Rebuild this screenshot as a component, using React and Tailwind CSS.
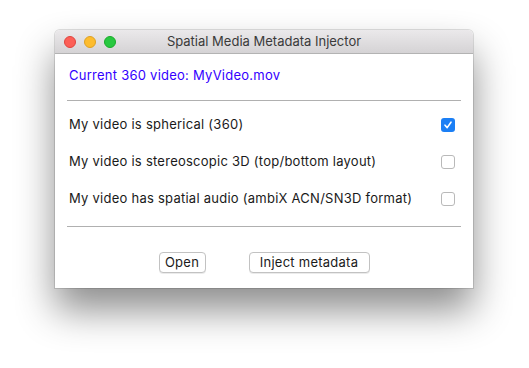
import React from "react";

function Check({ checked }) {
  if (checked) {
    return (
      <div className="w-[14px] h-[14px] rounded-[3px] bg-[#1b7ff5] flex items-center justify-center">
        <svg width="10" height="10" viewBox="0 0 10 10">
          <path d="M2 5.2 L4.2 7.6 L8 2.2" fill="none" stroke="white" strokeWidth="1.6" strokeLinecap="round" strokeLinejoin="round" />
        </svg>
      </div>
    );
  }
  return <div className="w-[14px] h-[14px] rounded-[3px] border border-[#b9b9b9] bg-white" />;
}

export default function App() {
  const rows = [
    ["My video is spherical (360)", true],
    ["My video is stereoscopic 3D (top/bottom layout)", false],
    ["My video has spatial audio (ambiX ACN/SN3D format)", false],
  ];
  return (
    <div className="w-[529px] h-[368px] bg-white pt-[30px] pl-[55px] font-['Inter',sans-serif] text-[13px] tracking-[0.25px] text-[#1a1a1a]">
      <div className="w-[418px] h-[258px] bg-white rounded-t-[5px] flex flex-col shadow-[0_0_0_1px_rgba(0,0,0,0.12),0_22px_38px_rgba(0,0,0,0.45)]">
        {/* TITLE BAR */}
        <div className="h-[24px] rounded-t-[5px] bg-gradient-to-b from-[#ebe9eb] to-[#d5d3d5] border-b border-[#b3b3b3] flex items-center relative">
          <div className="flex gap-[8px] pl-[9px]">
            <div className="w-[12px] h-[12px] rounded-full bg-[#fc5f57] border border-[#e0443e]" />
            <div className="w-[12px] h-[12px] rounded-full bg-[#fdbc2e] border border-[#dea123]" />
            <div className="w-[12px] h-[12px] rounded-full bg-[#28c840] border border-[#1aab29]" />
          </div>
          <div className="absolute inset-0 flex items-center justify-center tracking-normal text-[#3a3a3a]">
            Spatial Media Metadata Injector
          </div>
        </div>

        {/* BODY */}
        <div className="flex-1 flex flex-col px-[12px]">
          <div className="pl-[2px] pt-[12px] h-[46px] text-[#3300ff]">Current 360 video: MyVideo.mov</div>
          <div className="h-px bg-[#b0b0b0]" />
          <div className="flex flex-col pt-[16px] gap-[21px]">
            {rows.map(([label, on]) => (
              <div key={label} className="flex items-center justify-between pl-[2px] pr-[6px] h-[16px]">
                <span>{label}</span>
                <Check checked={on} />
              </div>
            ))}
          </div>
          <div className="h-px bg-[#b0b0b0] mt-[19px]" />
          <div className="flex justify-center gap-[43px] pt-[25px]">
            <button className="w-[47px] h-[21px] rounded-[4px] border border-[#c2c2c2] bg-white shadow-[0_1px_0_rgba(0,0,0,0.08)]">
              Open
            </button>
            <button className="w-[121px] h-[21px] rounded-[4px] border border-[#c2c2c2] bg-white shadow-[0_1px_0_rgba(0,0,0,0.08)]">
              Inject metadata
            </button>
          </div>
        </div>
      </div>
    </div>
  );
}
